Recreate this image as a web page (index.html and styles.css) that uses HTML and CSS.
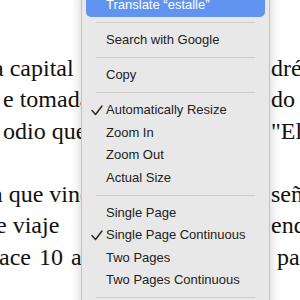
FILE: index.html
```html
<!DOCTYPE html>
<html lang="es">
<head>
<meta charset="UTF-8">
<title>Documento</title>
<link rel="stylesheet" href="styles.css">
</head>
<body>
<div class="doc">
  <p class="para">
    <span class="line"><span class="left"><span class="txt ind-1">a capital</span></span><span class="right">drés</span></span>
    <span class="line"><span class="left"><span class="txt ind-2">e tomada</span></span><span class="right">do</span></span>
    <span class="line"><span class="left"><span class="txt ind-3">odio que</span></span><span class="right">"El</span></span>
  </p>
  <p class="para">
    <span class="line"><span class="left"><span class="txt ind-4">a que vino</span></span><span class="right">señ</span></span>
    <span class="line"><span class="left"><span class="txt ind-5">e viaje</span></span><span class="right">end</span></span>
    <span class="line"><span class="left"><span class="txt ind-6">ace 10 años</span></span><span class="right pad">pa</span></span>
  </p>
</div>

<div class="menu">
  <div class="item active">Translate “estalle”</div>
  <div class="sep"></div>
  <div class="item">Search with Google</div>
  <div class="sep"></div>
  <div class="item">Copy</div>
  <div class="sep"></div>
  <div class="item"><svg class="check" width="12" height="11" viewBox="0 0 12 11"><polyline points="1,5.5 4.5,9.5 11,1" fill="none" stroke="#2b2b2b" stroke-width="1.5" stroke-linecap="round" stroke-linejoin="round"/></svg>Automatically Resize</div>
  <div class="item">Zoom In</div>
  <div class="item">Zoom Out</div>
  <div class="item">Actual Size</div>
  <div class="sep"></div>
  <div class="item">Single Page</div>
  <div class="item"><svg class="check" width="12" height="11" viewBox="0 0 12 11"><polyline points="1,5.5 4.5,9.5 11,1" fill="none" stroke="#2b2b2b" stroke-width="1.5" stroke-linecap="round" stroke-linejoin="round"/></svg>Single Page Continuous</div>
  <div class="item">Two Pages</div>
  <div class="item">Two Pages Continuous</div>
  <div class="sep"></div>
  <div class="item">Print…</div>
</div>
</body>
</html>
```

FILE: styles.css
```css
html, body {
  margin: 0;
  padding: 0;
  width: 300px;
  height: 300px;
  overflow: hidden;
  background: #fff;
}

body {
  position: relative;
}

.doc {
  font-family: "Liberation Serif", "Times New Roman", serif;
  font-size: 24px;
  line-height: 31.5px;
  color: #111;
  padding-top: 52.5px;
}

.para {
  margin: 0 0 31.5px 0;
}

.line {
  display: grid;
  grid-template-columns: 271px auto;
  white-space: nowrap;
}

.left {
  overflow: hidden;
}

.txt {
  display: inline-block;
}

.ind-1 { margin-left: -7px; }
.ind-2 { margin-left: 3px; }
.ind-3 { margin-left: 3px; }
.ind-4 { margin-left: -8px; }
.ind-5 { margin-left: -4px; }
.ind-6 { margin-left: -1px; word-spacing: 2px; }

.right {
  overflow: hidden;
}

.right.pad {
  padding-left: 6px;
}

.menu {
  position: absolute;
  left: 81px;
  top: -11px;
  width: 179px;
  padding: 4px;
  background: #e8e8e8;
  border: 1px solid #c4c4c4;
  border-radius: 6px;
  box-shadow: 0 0 12px rgba(0, 0, 0, 0.2);
  font-family: "Liberation Sans", Arial, sans-serif;
  font-size: 13px;
  color: #222;
}

.item {
  position: relative;
  height: 22.5px;
  line-height: 22.5px;
  padding-left: 20px;
  border-radius: 5px;
  white-space: nowrap;
}

.item.active {
  background: #6193f0;
  color: #fff;
}

.check {
  position: absolute;
  left: 5px;
  top: 6px;
}

.sep {
  height: 1px;
  margin: 5.75px 10px;
  background: #cdcdcd;
}
```
